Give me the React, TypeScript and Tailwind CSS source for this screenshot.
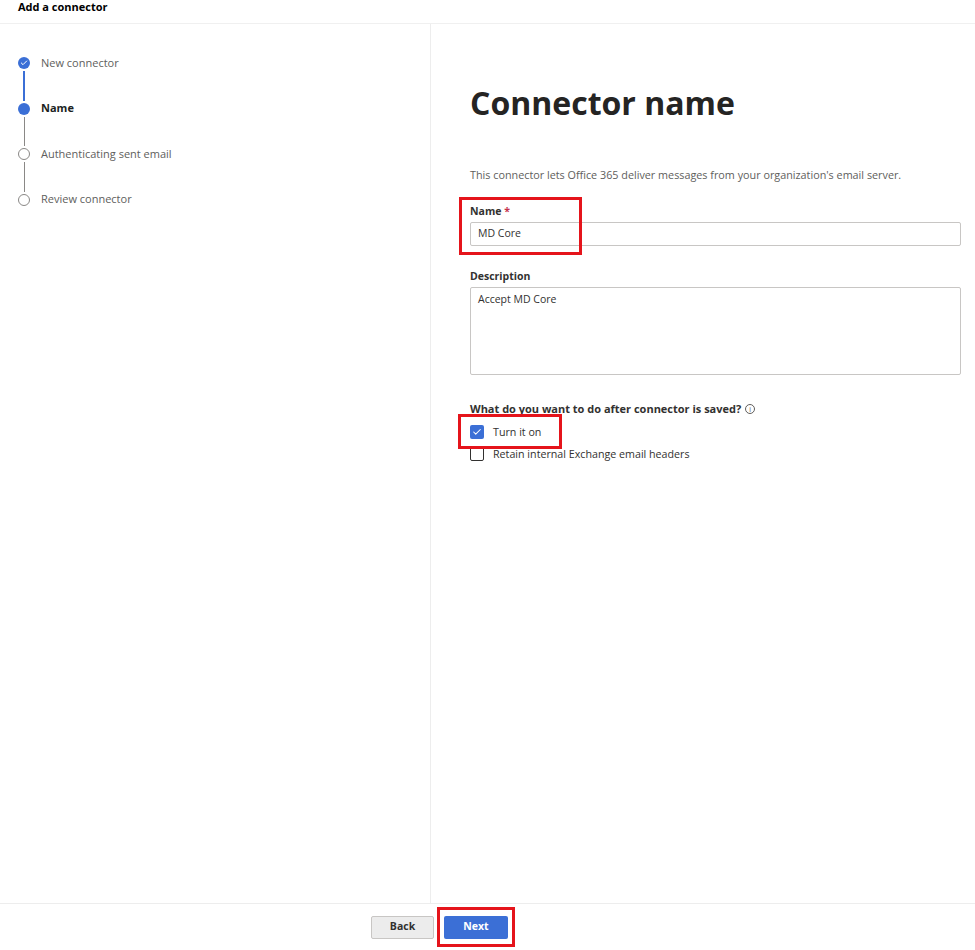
import { Check } from "lucide-react";

type StepState = "done" | "current" | "todo";

const steps: { label: string; state: StepState }[] = [
  { label: "New connector", state: "done" },
  { label: "Name", state: "current" },
  { label: "Authenticating sent email", state: "todo" },
  { label: "Review connector", state: "todo" },
];

const StepDot = ({ state }: { state: StepState }) => {
  if (state === "done") {
    return (
      <span className="flex h-[12px] w-[12px] items-center justify-center rounded-full bg-[#3b6fd6]">
        <Check className="h-[8px] w-[8px] text-white" strokeWidth={3} />
      </span>
    );
  }
  if (state === "current") {
    return <span className="h-[12px] w-[12px] rounded-full bg-[#3b6fd6]" />;
  }
  return <span className="h-[12px] w-[12px] rounded-full border border-[#8a8886] bg-white" />;
};

export default function App() {
  return (
    <div
      className="relative flex h-[950px] w-[975px] flex-col bg-white text-[#323130]"
      style={{ fontFamily: '"Open Sans", "Noto Sans", Arial, sans-serif' }}
    >
      {/* Header */}
      <div className="flex h-[24px] items-start border-b border-[#f0f0f0] px-[18px]">
        <span className="text-[11px] font-bold leading-[14px] text-black">Add a connector</span>
      </div>

      <div className="flex flex-1">
        {/* Steps */}
        <div className="w-[431px] border-r border-[#ededed] pl-[18px] pt-[33px]">
          {steps.map((step, i) => (
            <div key={step.label}>
              <div className="flex h-[12px] items-center gap-[11px]">
                <StepDot state={step.state} />
                <span
                  className={
                    step.state === "current"
                      ? "text-[11px] font-bold text-[#201f1e]"
                      : "text-[11px] text-[#605e5c]"
                  }
                >
                  {step.label}
                </span>
              </div>
              {i < steps.length - 1 && (
                <div className="flex h-[33.5px] w-[12px] justify-center py-[2px]">
                  <div className={i === 0 ? "w-[1.5px] bg-[#3b6fd6]" : "w-px bg-[#8a8886]"} />
                </div>
              )}
            </div>
          ))}
        </div>

        {/* Form */}
        <div className="flex-1 pl-[39px] pr-[14px] pt-[57px]">
          <h1 className="text-[32px] font-bold leading-[44px] text-[#252423]">Connector name</h1>

          <p className="mt-[43px] text-[10.8px] leading-[14px] text-[#605e5c]">
            This connector lets Office 365 deliver messages from your organization's email server.
          </p>

          <div className="mt-[22px]">
            <div className="text-[10.5px] font-bold leading-[14px] text-[#323130]">
              Name <span className="text-[#c4314b]">*</span>
            </div>
            <div className="mt-[4px] flex h-[24px] items-center rounded-[2px] border border-[#c8c6c4] px-[7px] text-[10.5px] text-[#323130]">
              MD Core
            </div>
          </div>

          <div className="mt-[23px]">
            <div className="text-[10.5px] font-bold leading-[14px] text-[#323130]">Description</div>
            <div className="mt-[4px] h-[88px] rounded-[2px] border border-[#c8c6c4] px-[7px] py-[4px] text-[10.5px] text-[#323130]">
              Accept MD Core
            </div>
          </div>

          <div className="mt-[27px] flex items-center gap-[4px]">
            <span className="text-[11px] font-bold leading-[14px] text-[#323130]">
              What do you want to do after connector is saved?
            </span>
            <span className="flex h-[10px] w-[10px] items-center justify-center rounded-full border border-[#605e5c] text-[7px] leading-none text-[#605e5c]">
              i
            </span>
          </div>

          <div className="mt-[8px] flex flex-col gap-[6px]">
            <div className="flex items-center gap-[9px]">
              <span className="flex h-[14px] w-[14px] items-center justify-center rounded-[2px] bg-[#3b6fd6]">
                <Check className="h-[10px] w-[10px] text-white" strokeWidth={2.5} />
              </span>
              <span className="text-[10.7px] text-[#323130]">Turn it on</span>
            </div>
            <div className="flex items-center gap-[9px]">
              <span className="h-[14px] w-[14px] rounded-[2px] border border-[#323130] bg-white" />
              <span className="text-[10.7px] text-[#323130]">Retain internal Exchange email headers</span>
            </div>
          </div>
        </div>
      </div>

      {/* Footer */}
      <div className="flex h-[47px] items-center gap-[10px] border-t border-[#ededed] pl-[371px]">
        <button className="h-[23px] w-[63px] rounded-[2px] border border-[#c8c6c4] bg-[#ececec] text-[10.5px] font-bold text-[#323130]">
          Back
        </button>
        <button className="h-[23px] w-[64px] rounded-[2px] bg-[#3b6fd6] text-[10.5px] font-bold text-white">
          Next
        </button>
      </div>

      {/* Annotation boxes */}
      <div className="pointer-events-none absolute left-[459px] top-[197px] h-[58px] w-[123px] border-[3px] border-[#e5141b]" />
      <div className="pointer-events-none absolute left-[458px] top-[414px] h-[35px] w-[104px] border-[3px] border-[#e5141b]" />
      <div className="pointer-events-none absolute left-[437px] top-[907px] h-[40px] w-[78px] border-[3px] border-[#e5141b]" />
    </div>
  );
}
